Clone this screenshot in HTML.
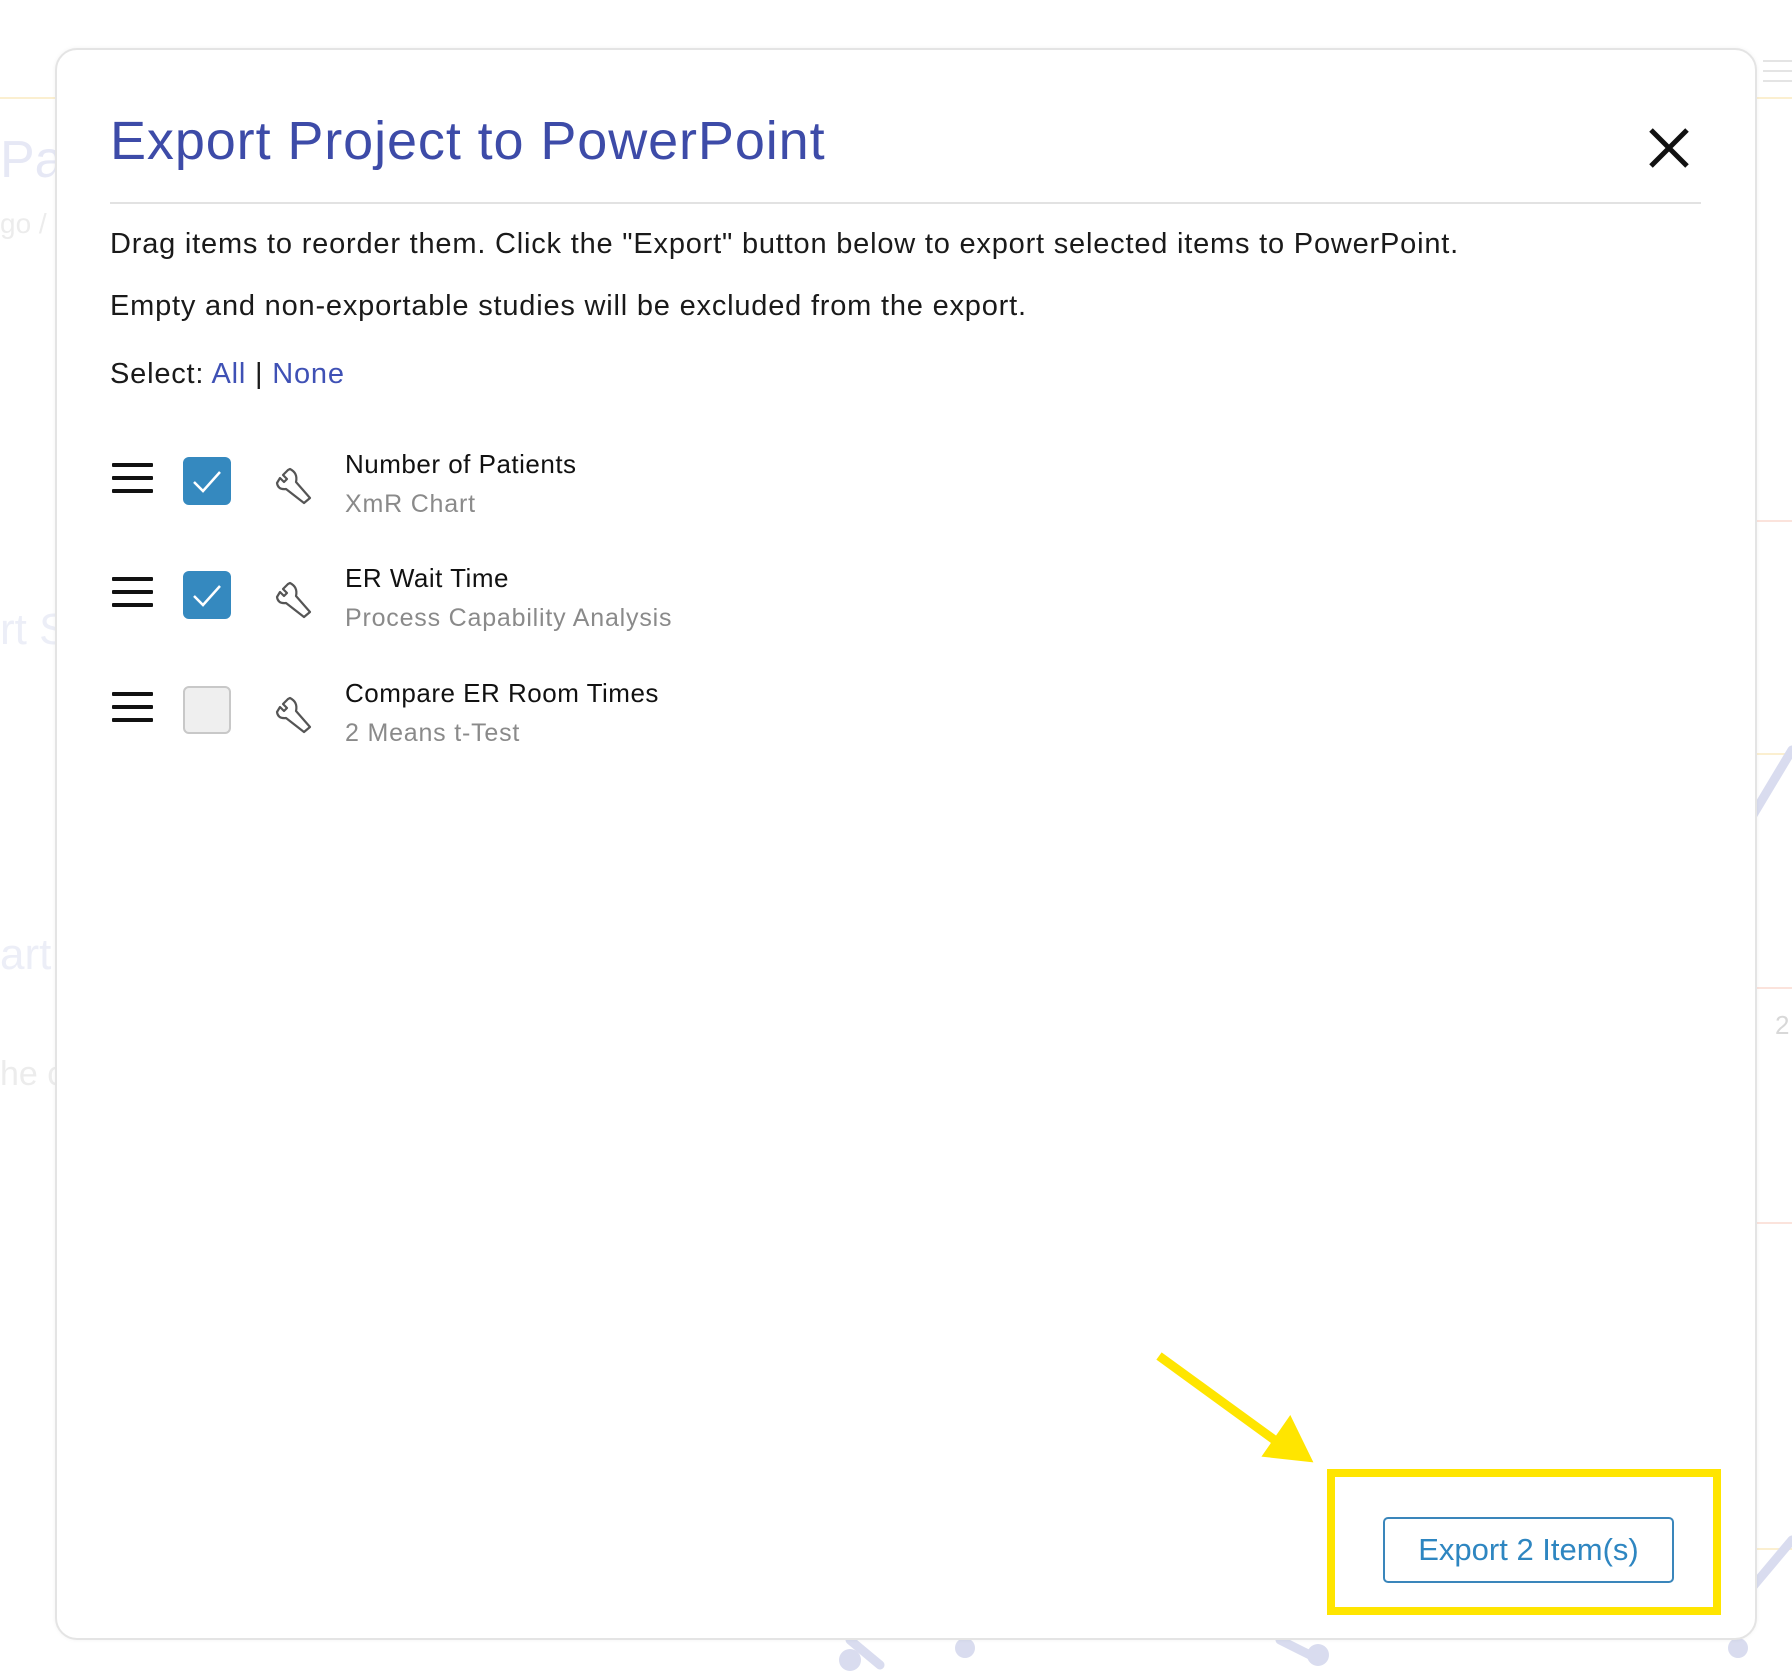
<!DOCTYPE html>
<html><head><meta charset="utf-8">
<style>
html,body{margin:0;padding:0;}
body{width:1792px;height:1677px;position:relative;overflow:hidden;background:#fff;font-family:"Liberation Sans",sans-serif;}
.abs{position:absolute;}
.modal{position:absolute;left:55px;top:48px;width:1698px;height:1588px;border:2px solid #e4e4e4;border-radius:22px;background:#fff;box-shadow:0 0 4px rgba(0,0,0,0.05);}
.title{left:110px;top:110px;font-size:54px;color:#3d4ba8;white-space:nowrap;letter-spacing:0.9px;}
.hr{left:110px;top:202px;width:1591px;height:2px;background:#e2e2e2;}
.p{left:110px;font-size:29px;color:#1a1a1a;white-space:nowrap;letter-spacing:0.8px;}
.link{color:#3f51b5;}
.ham{left:112px;width:41px;}
.ham div{height:4px;background:#111;margin-bottom:9px;border-radius:1px;}
.cb{left:183px;width:48px;height:48px;border-radius:6px;}
.cb.on{background:#3589bf;}
.cb.off{background:#efefef;border:2px solid #c8c8c8;box-sizing:border-box;}
.wr{left:274px;}
.it{left:345px;font-size:26px;color:#111;white-space:nowrap;letter-spacing:0.5px;}
.sub{left:345px;font-size:25px;color:#8a8a8a;white-space:nowrap;letter-spacing:0.8px;}
</style></head><body>
<div class="abs" style="left:0;top:97px;width:56px;height:2px;background:#fbefd0"></div>
<div class="abs" style="left:0;top:130px;font-size:52px;color:#e6e8f5">Pa</div>
<div class="abs" style="left:0;top:208px;font-size:28px;color:#ececec">go /</div>
<div class="abs" style="left:0;top:605px;font-size:44px;color:#eceef7">rt S</div>
<div class="abs" style="left:0;top:930px;font-size:44px;color:#eceef7">art</div>
<div class="abs" style="left:0;top:1055px;font-size:34px;color:#ececec">he c</div>
<div class="abs" style="left:1757px;top:97px;width:35px;height:2px;background:#fbefd0"></div>
<div class="abs" style="left:1757px;top:520px;width:35px;height:2px;background:#fbe3dc"></div>
<div class="abs" style="left:1757px;top:753px;width:35px;height:2px;background:#fbefd0"></div>
<div class="abs" style="left:1757px;top:987px;width:35px;height:2px;background:#fbe3dc"></div>
<div class="abs" style="left:1757px;top:1222px;width:35px;height:2px;background:#fbe3dc"></div>
<div class="abs" style="left:1757px;top:1548px;width:35px;height:2px;background:#fbefd0"></div>
<div class="abs" style="left:1775px;top:1010px;font-size:26px;color:#d8d8d8">2</div>
<svg class="abs" style="left:0;top:0" width="1792" height="1677">
<g stroke="#d9dcef" stroke-width="9" fill="none" stroke-linecap="round">
<path d="M1750 820 L1792 750"/><path d="M1750 1590 L1792 1540"/>
<path d="M850 1640 L880 1665"/><path d="M1280 1640 L1320 1660"/>
</g>
<g fill="#d9dcef"><circle cx="850" cy="1660" r="11"/><circle cx="965" cy="1648" r="10"/><circle cx="1318" cy="1655" r="11"/><circle cx="1738" cy="1648" r="10"/></g>
<g fill="#e4e4e4"><rect x="1763" y="60" width="29" height="2"/><rect x="1763" y="70" width="29" height="2"/><rect x="1763" y="80" width="29" height="2"/></g>
</svg>

<div class="modal"></div>
<div class="abs title">Export Project to PowerPoint</div>
<svg class="abs" style="left:1648px;top:127px" width="42" height="42"><path d="M3 3 L39 39 M39 3 L3 39" stroke="#111" stroke-width="5"/></svg>
<div class="abs hr"></div>
<div class="abs p" style="top:228px">Drag items to reorder them. Click the "Export" button below to export selected items to PowerPoint.</div>
<div class="abs p" style="top:290px">Empty and non-exportable studies will be excluded from the export.</div>
<div class="abs p" style="top:358px">Select: <span class="link">All</span> | <span class="link">None</span></div>

<div class="abs ham" style="top:463px"><div></div><div></div><div></div></div>
<div class="abs cb on" style="top:457px"><svg width="48" height="48"><path d="M11 25 L20 34 L37 15" stroke="#fff" stroke-width="2.5" fill="none"/></svg></div>
<svg class="abs wr" style="top:465px" width="42" height="40" viewBox="0 0 42 40"><path d="M14 5 L9 10 L13 14 L10 17 L6 13 L3 18 Q4 25 12 24 L30 38 L36 33 L22 17 Q24 8 16 4 Z" fill="none" stroke="#555" stroke-width="2.2" stroke-linejoin="round"/></svg>
<div class="abs it" style="top:449px">Number of Patients</div>
<div class="abs sub" style="top:490px">XmR Chart</div>

<div class="abs ham" style="top:577px"><div></div><div></div><div></div></div>
<div class="abs cb on" style="top:571px"><svg width="48" height="48"><path d="M11 25 L20 34 L37 15" stroke="#fff" stroke-width="2.5" fill="none"/></svg></div>
<svg class="abs wr" style="top:579px" width="42" height="40" viewBox="0 0 42 40"><path d="M14 5 L9 10 L13 14 L10 17 L6 13 L3 18 Q4 25 12 24 L30 38 L36 33 L22 17 Q24 8 16 4 Z" fill="none" stroke="#555" stroke-width="2.2" stroke-linejoin="round"/></svg>
<div class="abs it" style="top:563px">ER Wait Time</div>
<div class="abs sub" style="top:604px">Process Capability Analysis</div>

<div class="abs ham" style="top:692px"><div></div><div></div><div></div></div>
<div class="abs cb off" style="top:686px"></div>
<svg class="abs wr" style="top:694px" width="42" height="40" viewBox="0 0 42 40"><path d="M14 5 L9 10 L13 14 L10 17 L6 13 L3 18 Q4 25 12 24 L30 38 L36 33 L22 17 Q24 8 16 4 Z" fill="none" stroke="#555" stroke-width="2.2" stroke-linejoin="round"/></svg>
<div class="abs it" style="top:678px">Compare ER Room Times</div>
<div class="abs sub" style="top:719px">2 Means t-Test</div>

<svg class="abs" style="left:0;top:0" width="1792" height="1677">
<line x1="1159" y1="1356" x2="1280" y2="1444" stroke="#ffe500" stroke-width="9"/>
<polygon points="1290,1419 1310,1460 1265,1455" fill="#ffe500" stroke="#ffe500" stroke-width="4"/>
<rect x="1331" y="1473" width="386" height="138" fill="none" stroke="#ffe500" stroke-width="8"/>
</svg>
<div class="abs" style="left:1383px;top:1517px;width:291px;height:66px;box-sizing:border-box;border:2px solid #3a86bb;border-radius:5px;color:#2e86c1;font-size:31px;display:flex;align-items:center;justify-content:center;">Export 2 Item(s)</div>
</body></html>
